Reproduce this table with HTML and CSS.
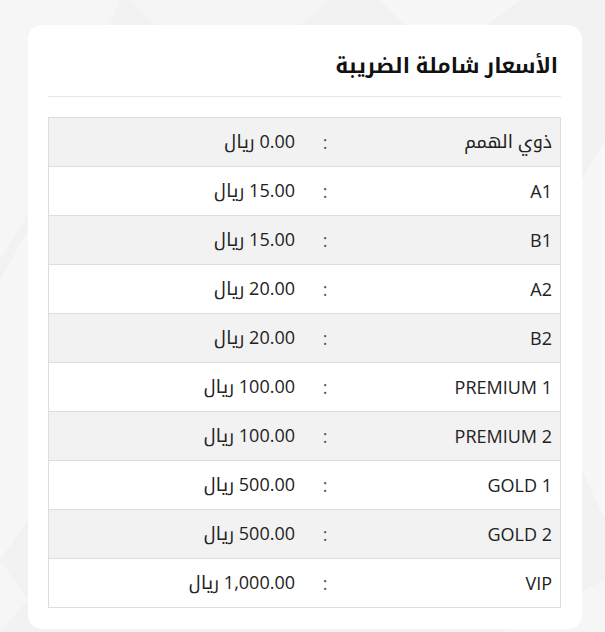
FILE: index.html
```html
<!DOCTYPE html>
<html lang="ar" dir="rtl">
<head>
<meta charset="utf-8">
<title>الأسعار شاملة الضريبة</title>
<link rel="stylesheet" href="styles.css">
</head>
<body>
<svg class="bg" width="605" height="632" viewBox="0 0 605 632" aria-hidden="true">
  <polygon points="0,0 120,0 30,210 0,260" fill="#f6f6f6"/>
  <polygon points="130,0 330,0 220,90" fill="#f5f5f5"/>
  <polygon points="380,0 520,0 440,60" fill="#f7f7f7"/>
  <polygon points="0,280 28,230 28,520 0,560" fill="#f7f7f7"/>
  <polygon points="582,180 605,140 605,520 582,470" fill="#f7f7f7"/>
  <polygon points="0,560 28,600 0,632" fill="#f6f6f6"/>
  <polygon points="500,632 605,580 605,632" fill="#f6f6f6"/>
</svg>
<main class="card">
  <h2 class="card-title">الأسعار شاملة الضريبة</h2>
  <table class="prices">
    <tbody>
      <tr><td class="label">ذوي الهمم</td><td class="sep">:</td><td class="value">0.00 ريال</td></tr>
      <tr><td class="label">A1</td><td class="sep">:</td><td class="value">15.00 ريال</td></tr>
      <tr><td class="label">B1</td><td class="sep">:</td><td class="value">15.00 ريال</td></tr>
      <tr><td class="label">A2</td><td class="sep">:</td><td class="value">20.00 ريال</td></tr>
      <tr><td class="label">B2</td><td class="sep">:</td><td class="value">20.00 ريال</td></tr>
      <tr><td class="label">PREMIUM 1</td><td class="sep">:</td><td class="value">100.00 ريال</td></tr>
      <tr><td class="label">PREMIUM 2</td><td class="sep">:</td><td class="value">100.00 ريال</td></tr>
      <tr><td class="label">GOLD 1</td><td class="sep">:</td><td class="value">500.00 ريال</td></tr>
      <tr><td class="label">GOLD 2</td><td class="sep">:</td><td class="value">500.00 ريال</td></tr>
      <tr><td class="label">VIP</td><td class="sep">:</td><td class="value">1,000.00 ريال</td></tr>
    </tbody>
  </table>
</main>
</body>
</html>
```
FILE: styles.css
```css
html, body {
  margin: 0;
  padding: 0;
}
body {
  background: #f2f2f2;
  font-family: "Open Sans", "Noto Kufi Arabic", "Noto Sans Arabic", "DejaVu Sans", sans-serif;
  color: #222;
  position: relative;
  width: 605px;
  height: 632px;
  overflow: hidden;
}
.bg {
  position: absolute;
  left: 0;
  top: 0;
  z-index: 0;
}
.card {
  position: relative;
  z-index: 1;
  box-sizing: border-box;
  width: 554px;
  margin: 25px 23px 0 28px;
  background: #fff;
  border-radius: 14px;
  padding: 20px 21px 21px 20px;
}
.card-title {
  margin: 0;
  font-size: 21px;
  font-weight: 700;
  line-height: 40px;
  height: 40px;
  padding: 0 3px 11px 0;
  border-bottom: 1px solid #e6e6e6;
  color: #111;
}
.prices {
  margin-top: 20px;
  width: 100%;
  border-collapse: collapse;
  table-layout: fixed;
  border: 1px solid #dddddd;
  font-size: 18px;
}
.prices tr:nth-child(odd) {
  background: #f2f2f2;
}
.prices td {
  height: 48px;
  padding: 0;
  border-bottom: 1px solid #dddddd;
  vertical-align: middle;
  text-align: right;
}
.prices .label {
  width: 212px;
  padding-right: 8px;
}
.prices .sep {
  width: 30px;
  text-align: center;
  color: #555;
}
.prices .value {
  padding-right: 15px;
}
```
